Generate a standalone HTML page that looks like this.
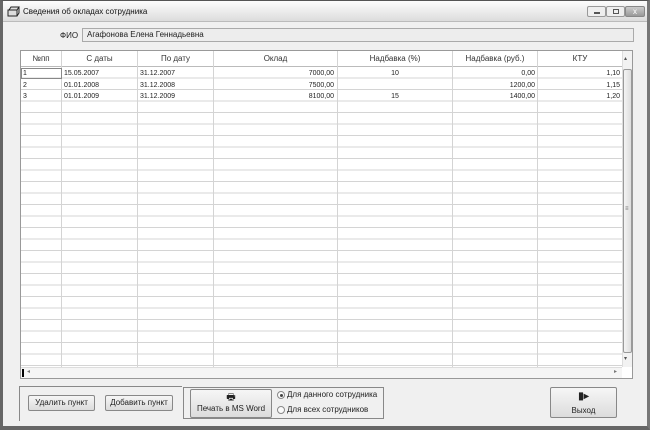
<!DOCTYPE html>
<html><head><meta charset="utf-8"><style>
*{margin:0;padding:0;box-sizing:border-box}
body{width:650px;height:430px;overflow:hidden;font-family:"Liberation Sans",sans-serif;font-size:8px;color:#222;background:#fff}
.win{position:absolute;left:0;top:0;width:650px;height:430px;background:#f0f0f0;border:1px solid #555;border-left:3px solid #666;border-right:3px solid #777;border-bottom:4px solid #666}
.title{position:absolute;left:0;top:0;width:644px;height:21px;background:linear-gradient(#fdfdfd,#dcdcdc);border-bottom:1px solid #bbb}
.title span{position:absolute;left:20px;top:6px;font-size:8px;color:#111}
.ab{position:absolute}
.grid{position:absolute;left:20px;top:50px;width:613px;height:329px;border:1px solid #999;background:#fff;overflow:hidden}
.rows{position:absolute;left:0;top:16px;width:601px;height:300px;background:repeating-linear-gradient(to bottom,transparent 0,transparent 10.5px,#d4d4d4 10.5px,#d4d4d4 11.5px)}
.vl{position:absolute;top:0;width:1px;height:316px;background:#d4d4d4}
.hd{position:absolute;top:0;height:16px;line-height:16px;text-align:center;font-size:8px;color:#333;background:#fff;border-bottom:1px solid #bbb}
.c{position:absolute;font-size:7px;line-height:11px;height:11px}
.btn{position:absolute;border:1px solid #888;border-radius:2px;background:linear-gradient(#f6f6f6,#dcdcdc);text-align:center;font-size:8px;color:#222}
.grp{position:absolute;border:1px solid #888}
.rad{position:absolute;width:8px;height:8px;border-radius:50%;border:1px solid #888;background:#fafafa}
</style></head><body>
<div class="win">
<div class="title"><svg class="ab" style="left:4px;top:5px" width="13" height="11"><path d="M1 4h9v6H1z M2 4l2-3h8l-2 3 M10 10l2-3V1" fill="#ddd" stroke="#222" stroke-width="1"/></svg><span>Сведения об окладах сотрудника</span>
<div class="ab" style="left:584px;top:5px;width:19px;height:11px;border:1px solid #999;border-radius:2px;background:#eee"><div class="ab" style="left:6px;top:5px;width:6px;height:2px;border:1px solid #555"></div></div>
<div class="ab" style="left:603px;top:5px;width:19px;height:11px;border:1px solid #999;border-radius:2px;background:#eee"><div class="ab" style="left:6px;top:2px;width:6px;height:5px;border:1px solid #555"></div></div>
<div class="ab" style="left:622px;top:5px;width:20px;height:11px;border:1px solid #888;border-radius:2px;background:linear-gradient(#ccc,#999);color:#fff;font-size:8px;line-height:9px;text-align:center">x</div>
</div>
<div class="ab" style="left:57px;top:30px;font-size:8px">ФИО</div>
<div class="ab" style="left:79px;top:27px;width:552px;height:14px;border:1px solid #aaa;background:#ededed;padding-left:4px;line-height:12px;font-size:8px">Агафонова Елена Геннадьевна</div>
</div>
<div class="grid">
<div class="rows"></div>
<div class="vl" style="left:40px"></div><div class="vl" style="left:116px"></div><div class="vl" style="left:192px"></div><div class="vl" style="left:316px"></div><div class="vl" style="left:431px"></div><div class="vl" style="left:516px"></div><div class="vl" style="left:601px"></div>
<div class="hd" style="left:0;width:40px">№пп</div><div class="hd" style="left:41px;width:75px">С даты</div><div class="hd" style="left:117px;width:75px">По дату</div><div class="hd" style="left:193px;width:123px">Оклад</div><div class="hd" style="left:317px;width:114px">Надбавка (%)</div><div class="hd" style="left:432px;width:84px">Надбавка (руб.)</div><div class="hd" style="left:517px;width:84px">КТУ</div>
<div class="ab" style="left:0;top:17px;width:41px;height:11px;border:1px solid #888"></div>
<div class="c" style="left:2px;top:17px">1</div><div class="c" style="left:43px;top:17px">15.05.2007</div><div class="c" style="left:119px;top:17px">31.12.2007</div><div class="c" style="left:193px;top:17px;width:120px;text-align:right">7000,00</div><div class="c" style="left:317px;top:17px;width:114px;text-align:center">10</div><div class="c" style="left:432px;top:17px;width:82px;text-align:right">0,00</div><div class="c" style="left:517px;top:17px;width:82px;text-align:right">1,10</div>
<div class="c" style="left:2px;top:28.5px">2</div><div class="c" style="left:43px;top:28.5px">01.01.2008</div><div class="c" style="left:119px;top:28.5px">31.12.2008</div><div class="c" style="left:193px;top:28.5px;width:120px;text-align:right">7500,00</div><div class="c" style="left:432px;top:28.5px;width:82px;text-align:right">1200,00</div><div class="c" style="left:517px;top:28.5px;width:82px;text-align:right">1,15</div>
<div class="c" style="left:2px;top:40px">3</div><div class="c" style="left:43px;top:40px">01.01.2009</div><div class="c" style="left:119px;top:40px">31.12.2009</div><div class="c" style="left:193px;top:40px;width:120px;text-align:right">8100,00</div><div class="c" style="left:317px;top:40px;width:114px;text-align:center">15</div><div class="c" style="left:432px;top:40px;width:82px;text-align:right">1400,00</div><div class="c" style="left:517px;top:40px;width:82px;text-align:right">1,20</div>
<div class="ab" style="left:601px;top:0;width:11px;height:316px;background:#f2f2f2;border-left:1px solid #ddd"></div>
<div class="ab" style="left:603px;top:4px;font-size:6px;color:#555">▴</div>
<div class="ab" style="left:602px;top:18px;width:9px;height:284px;border:1px solid #999;border-radius:2px;background:linear-gradient(90deg,#f4f4f4,#ddd)"></div>
<div class="ab" style="left:604px;top:155px;font-size:6px;color:#666">≡</div>
<div class="ab" style="left:603px;top:304px;font-size:6px;color:#555">▾</div>
<div class="ab" style="left:0;top:316px;width:601px;height:12px;background:#f5f5f5;border-top:1px solid #ddd"></div>
<div class="ab" style="left:1px;top:318px;width:2px;height:8px;background:#000"></div>
<div class="ab" style="left:6px;top:317px;font-size:6px;color:#777">◂</div>
<div class="ab" style="left:593px;top:317px;font-size:6px;color:#777">▸</div>
</div>
<div class="grp" style="left:19px;top:386px;width:163px;height:35px;border-bottom:none;border-right:none;border-color:#888 #ccc #ccc #888"></div>
<div class="btn" style="left:28px;top:395px;width:67px;height:16px;line-height:14px">Удалить пункт</div>
<div class="btn" style="left:105px;top:395px;width:68px;height:16px;line-height:14px">Добавить пункт</div>
<div class="grp" style="left:183px;top:387px;width:201px;height:32px"></div>
<div class="btn" style="left:190px;top:389px;width:82px;height:29px"><div style="margin-top:2px;font-size:10px;line-height:12px">🖶</div><div style="line-height:10px">Печать в MS Word</div></div>
<div class="rad" style="left:277px;top:391px"><div class="ab" style="left:2px;top:2px;width:3px;height:3px;border-radius:50%;background:#444"></div></div>
<div class="ab" style="left:287px;top:390px;font-size:8px">Для данного сотрудника</div>
<div class="rad" style="left:277px;top:406px"></div>
<div class="ab" style="left:287px;top:405px;font-size:8px">Для всех сотрудников</div>
<div class="btn" style="left:550px;top:387px;width:67px;height:31px"><div style="margin-top:3px;font-size:10px;line-height:12px;font-weight:bold">▮▸</div><div style="margin-top:3px;line-height:10px">Выход</div></div>
</body></html>
